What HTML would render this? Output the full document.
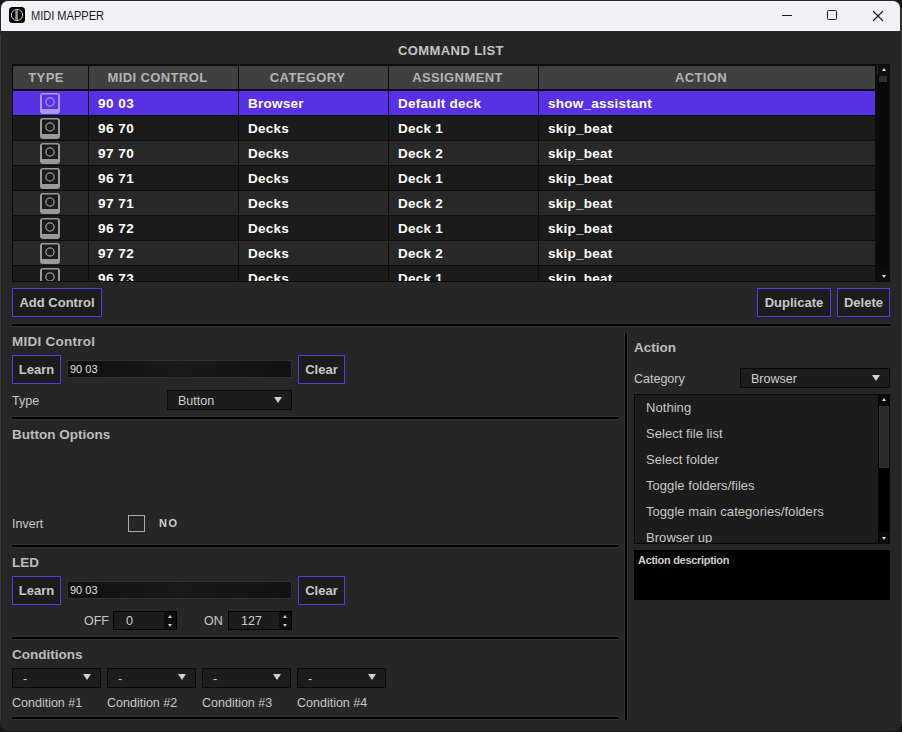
<!DOCTYPE html><html><head><meta charset="utf-8"><style>
*{margin:0;padding:0;box-sizing:border-box}
html,body{width:902px;height:732px;overflow:hidden;background:#161616;font-family:"Liberation Sans",sans-serif}
.a{position:absolute}
#win{position:absolute;left:0px;top:0;width:901px;height:731px;background:#262626;border-radius:8px;overflow:hidden}
#title{position:absolute;left:1px;top:1px;width:899px;height:30px;background:#f3f1f6;border-radius:7px 7px 0 0}
.b{font-weight:bold}
.hd{position:absolute;top:66px;height:23px;background:#404040;color:#b4b4b4;font-weight:bold;font-size:13px;text-align:center;line-height:23px;letter-spacing:0.4px;padding-right:12px}
.row{position:absolute;left:13px;width:862px;height:24px}
.cell{position:absolute;top:1px;height:24px;line-height:24px;letter-spacing:0.25px;color:#fff;font-weight:bold;font-size:13.5px;white-space:nowrap}
.btn{position:absolute;border:1px solid #5a3ae8;background:#1c1c1c;color:#c8c8c8;font-weight:bold;font-size:13px;text-align:center}
.sep{position:absolute;height:2px;background:#000;box-shadow:0 1px 0 #333,0 -1px 0 #333}
.lbl{position:absolute;color:#c8c8c8;font-size:12.5px;white-space:nowrap}
.hdr{position:absolute;color:#bdbdbd;font-weight:bold;font-size:13.5px;white-space:nowrap}
.tf{position:absolute;background:linear-gradient(90deg,#101010,#191919 50%,#111111);border:1px solid #303030;color:#e0e0e0;font-size:11px}
.dd{position:absolute;background:#1c1c1c;border:1px solid #0a0a0a;color:#d0d0d0;font-size:12.5px;padding-top:1px}
.arr{position:absolute;width:0;height:0;border-left:4px solid transparent;border-right:4px solid transparent;border-top:6px solid #d0d0d0}
</style></head><body>
<div id="win">
<div id="title">
<svg class="a" style="left:8px;top:6px" width="16" height="16" viewBox="0 0 16 16"><rect x="0" y="0" width="16" height="16" rx="3.5" fill="#000"/><circle cx="8" cy="8" r="5.6" fill="none" stroke="#ddd" stroke-width="0.9"/><rect x="6.3" y="3.2" width="2.6" height="9.6" fill="#999"/></svg>
<div class="a" style="left:29.5px;top:6.5px;font-size:12px;color:#1a1a1a;line-height:16px;transform:scaleX(0.92);transform-origin:0 0;white-space:nowrap">MIDI MAPPER</div>
<div class="a" style="left:781px;top:14px;width:10px;height:1px;background:#1a1a1a"></div>
<div class="a" style="left:826px;top:9px;width:10px;height:10px;border:1px solid #1a1a1a;border-radius:1.5px"></div>
<svg class="a" style="left:871px;top:9px" width="12" height="12" viewBox="0 0 12 12"><path d="M1 1L11 11M11 1L1 11" stroke="#1a1a1a" stroke-width="1.1"/></svg>
</div>
<div class="hdr" style="left:0;width:902px;text-align:center;top:43px;font-size:13px;letter-spacing:0.4px;color:#c4c4c4;line-height:16px">COMMAND LIST</div>
<div class="a" style="left:12px;top:64px;width:878px;height:218px;background:#0c0c0c;overflow:hidden">
<div class="hd" style="left:1px;top:2px;width:75px;padding-right:9px;">TYPE</div>
<div class="hd" style="left:77px;top:2px;width:149px;">MIDI CONTROL</div>
<div class="hd" style="left:227px;top:2px;width:149px;">CATEGORY</div>
<div class="hd" style="left:377px;top:2px;width:149px;">ASSIGNMENT</div>
<div class="hd" style="left:527px;top:2px;width:336px;">ACTION</div>
<div class="a" style="left:1px;top:27px;width:862px;height:24px">
<div class="a" style="left:0px;top:0;width:75px;height:24px;background:#5930e4"></div>
<div class="a" style="left:76px;top:0;width:149px;height:24px;background:#5930e4"></div>
<div class="a" style="left:226px;top:0;width:149px;height:24px;background:#5930e4"></div>
<div class="a" style="left:376px;top:0;width:149px;height:24px;background:#5930e4"></div>
<div class="a" style="left:526px;top:0;width:336px;height:24px;background:#5930e4"></div>
<svg width="20" height="21" viewBox="0 0 20 21" style="position:absolute;left:27px;top:2px"><rect x="0" y="0" width="20" height="21" rx="3" fill="#a898f0"/><rect x="2" y="1.6" width="16" height="14.4" rx="0.6" fill="#5930e4"/><circle cx="10" cy="9" r="4.1" fill="none" stroke="#a898f0" stroke-width="1.3"/></svg>
<div class="cell" style="left:85px;letter-spacing:0.5px">90 03</div>
<div class="cell" style="left:235px">Browser</div>
<div class="cell" style="left:385px">Default deck</div>
<div class="cell" style="left:535px">show_assistant</div>
</div>
<div class="a" style="left:1px;top:52px;width:862px;height:24px">
<div class="a" style="left:0px;top:0;width:75px;height:24px;background:#1b1b1b"></div>
<div class="a" style="left:76px;top:0;width:149px;height:24px;background:#1b1b1b"></div>
<div class="a" style="left:226px;top:0;width:149px;height:24px;background:#1b1b1b"></div>
<div class="a" style="left:376px;top:0;width:149px;height:24px;background:#1b1b1b"></div>
<div class="a" style="left:526px;top:0;width:336px;height:24px;background:#1b1b1b"></div>
<svg width="20" height="21" viewBox="0 0 20 21" style="position:absolute;left:27px;top:2px"><rect x="0" y="0" width="20" height="21" rx="3" fill="#9a9a9a"/><rect x="2" y="1.6" width="16" height="14.4" rx="0.6" fill="#1b1b1b"/><circle cx="10" cy="9" r="4.1" fill="none" stroke="#9a9a9a" stroke-width="1.3"/></svg>
<div class="cell" style="left:85px;letter-spacing:0.5px">96 70</div>
<div class="cell" style="left:235px">Decks</div>
<div class="cell" style="left:385px">Deck 1</div>
<div class="cell" style="left:535px">skip_beat</div>
</div>
<div class="a" style="left:1px;top:77px;width:862px;height:24px">
<div class="a" style="left:0px;top:0;width:75px;height:24px;background:#282828"></div>
<div class="a" style="left:76px;top:0;width:149px;height:24px;background:#282828"></div>
<div class="a" style="left:226px;top:0;width:149px;height:24px;background:#282828"></div>
<div class="a" style="left:376px;top:0;width:149px;height:24px;background:#282828"></div>
<div class="a" style="left:526px;top:0;width:336px;height:24px;background:#282828"></div>
<svg width="20" height="21" viewBox="0 0 20 21" style="position:absolute;left:27px;top:2px"><rect x="0" y="0" width="20" height="21" rx="3" fill="#9a9a9a"/><rect x="2" y="1.6" width="16" height="14.4" rx="0.6" fill="#1b1b1b"/><circle cx="10" cy="9" r="4.1" fill="none" stroke="#9a9a9a" stroke-width="1.3"/></svg>
<div class="cell" style="left:85px;letter-spacing:0.5px">97 70</div>
<div class="cell" style="left:235px">Decks</div>
<div class="cell" style="left:385px">Deck 2</div>
<div class="cell" style="left:535px">skip_beat</div>
</div>
<div class="a" style="left:1px;top:102px;width:862px;height:24px">
<div class="a" style="left:0px;top:0;width:75px;height:24px;background:#1b1b1b"></div>
<div class="a" style="left:76px;top:0;width:149px;height:24px;background:#1b1b1b"></div>
<div class="a" style="left:226px;top:0;width:149px;height:24px;background:#1b1b1b"></div>
<div class="a" style="left:376px;top:0;width:149px;height:24px;background:#1b1b1b"></div>
<div class="a" style="left:526px;top:0;width:336px;height:24px;background:#1b1b1b"></div>
<svg width="20" height="21" viewBox="0 0 20 21" style="position:absolute;left:27px;top:2px"><rect x="0" y="0" width="20" height="21" rx="3" fill="#9a9a9a"/><rect x="2" y="1.6" width="16" height="14.4" rx="0.6" fill="#1b1b1b"/><circle cx="10" cy="9" r="4.1" fill="none" stroke="#9a9a9a" stroke-width="1.3"/></svg>
<div class="cell" style="left:85px;letter-spacing:0.5px">96 71</div>
<div class="cell" style="left:235px">Decks</div>
<div class="cell" style="left:385px">Deck 1</div>
<div class="cell" style="left:535px">skip_beat</div>
</div>
<div class="a" style="left:1px;top:127px;width:862px;height:24px">
<div class="a" style="left:0px;top:0;width:75px;height:24px;background:#282828"></div>
<div class="a" style="left:76px;top:0;width:149px;height:24px;background:#282828"></div>
<div class="a" style="left:226px;top:0;width:149px;height:24px;background:#282828"></div>
<div class="a" style="left:376px;top:0;width:149px;height:24px;background:#282828"></div>
<div class="a" style="left:526px;top:0;width:336px;height:24px;background:#282828"></div>
<svg width="20" height="21" viewBox="0 0 20 21" style="position:absolute;left:27px;top:2px"><rect x="0" y="0" width="20" height="21" rx="3" fill="#9a9a9a"/><rect x="2" y="1.6" width="16" height="14.4" rx="0.6" fill="#1b1b1b"/><circle cx="10" cy="9" r="4.1" fill="none" stroke="#9a9a9a" stroke-width="1.3"/></svg>
<div class="cell" style="left:85px;letter-spacing:0.5px">97 71</div>
<div class="cell" style="left:235px">Decks</div>
<div class="cell" style="left:385px">Deck 2</div>
<div class="cell" style="left:535px">skip_beat</div>
</div>
<div class="a" style="left:1px;top:152px;width:862px;height:24px">
<div class="a" style="left:0px;top:0;width:75px;height:24px;background:#1b1b1b"></div>
<div class="a" style="left:76px;top:0;width:149px;height:24px;background:#1b1b1b"></div>
<div class="a" style="left:226px;top:0;width:149px;height:24px;background:#1b1b1b"></div>
<div class="a" style="left:376px;top:0;width:149px;height:24px;background:#1b1b1b"></div>
<div class="a" style="left:526px;top:0;width:336px;height:24px;background:#1b1b1b"></div>
<svg width="20" height="21" viewBox="0 0 20 21" style="position:absolute;left:27px;top:2px"><rect x="0" y="0" width="20" height="21" rx="3" fill="#9a9a9a"/><rect x="2" y="1.6" width="16" height="14.4" rx="0.6" fill="#1b1b1b"/><circle cx="10" cy="9" r="4.1" fill="none" stroke="#9a9a9a" stroke-width="1.3"/></svg>
<div class="cell" style="left:85px;letter-spacing:0.5px">96 72</div>
<div class="cell" style="left:235px">Decks</div>
<div class="cell" style="left:385px">Deck 1</div>
<div class="cell" style="left:535px">skip_beat</div>
</div>
<div class="a" style="left:1px;top:177px;width:862px;height:24px">
<div class="a" style="left:0px;top:0;width:75px;height:24px;background:#282828"></div>
<div class="a" style="left:76px;top:0;width:149px;height:24px;background:#282828"></div>
<div class="a" style="left:226px;top:0;width:149px;height:24px;background:#282828"></div>
<div class="a" style="left:376px;top:0;width:149px;height:24px;background:#282828"></div>
<div class="a" style="left:526px;top:0;width:336px;height:24px;background:#282828"></div>
<svg width="20" height="21" viewBox="0 0 20 21" style="position:absolute;left:27px;top:2px"><rect x="0" y="0" width="20" height="21" rx="3" fill="#9a9a9a"/><rect x="2" y="1.6" width="16" height="14.4" rx="0.6" fill="#1b1b1b"/><circle cx="10" cy="9" r="4.1" fill="none" stroke="#9a9a9a" stroke-width="1.3"/></svg>
<div class="cell" style="left:85px;letter-spacing:0.5px">97 72</div>
<div class="cell" style="left:235px">Decks</div>
<div class="cell" style="left:385px">Deck 2</div>
<div class="cell" style="left:535px">skip_beat</div>
</div>
<div class="a" style="left:1px;top:202px;width:862px;height:24px">
<div class="a" style="left:0px;top:0;width:75px;height:24px;background:#1b1b1b"></div>
<div class="a" style="left:76px;top:0;width:149px;height:24px;background:#1b1b1b"></div>
<div class="a" style="left:226px;top:0;width:149px;height:24px;background:#1b1b1b"></div>
<div class="a" style="left:376px;top:0;width:149px;height:24px;background:#1b1b1b"></div>
<div class="a" style="left:526px;top:0;width:336px;height:24px;background:#1b1b1b"></div>
<svg width="20" height="21" viewBox="0 0 20 21" style="position:absolute;left:27px;top:2px"><rect x="0" y="0" width="20" height="21" rx="3" fill="#9a9a9a"/><rect x="2" y="1.6" width="16" height="14.4" rx="0.6" fill="#1b1b1b"/><circle cx="10" cy="9" r="4.1" fill="none" stroke="#9a9a9a" stroke-width="1.3"/></svg>
<div class="cell" style="left:85px;letter-spacing:0.5px">96 73</div>
<div class="cell" style="left:235px">Decks</div>
<div class="cell" style="left:385px">Deck 1</div>
<div class="cell" style="left:535px">skip_beat</div>
</div>
<div class="a" style="left:0;top:217px;width:878px;height:1px;background:#0c0c0c"></div>
<div class="a" style="left:866px;top:2px;width:11px;height:213px;background:#0a0a0a"></div>
<div class="a" style="left:866px;top:1px;width:11px;height:10px;background:#0e0e0e"></div>
<div class="a" style="left:865px;top:1px;width:1px;height:10px;background:#2e2e2e"></div>
<div class="a" style="left:869.5px;top:4px;width:0;height:0;border-left:2.5px solid transparent;border-right:2.5px solid transparent;border-bottom:3px solid #ddd"></div>
<div class="a" style="left:867px;top:12px;width:8px;height:6px;background:#2a2a2a;border:1px solid #2e2e2e"></div>
<div class="a" style="left:866px;top:205px;width:11px;height:11px;background:#0e0e0e"></div>
<div class="a" style="left:869.5px;top:211px;width:0;height:0;border-left:2.5px solid transparent;border-right:2.5px solid transparent;border-top:3px solid #ddd"></div>
</div>
<div class="btn" style="left:12px;top:288px;width:90px;height:29px;line-height:27px">Add Control</div>
<div class="btn" style="left:757px;top:288px;width:74px;height:29px;line-height:27px">Duplicate</div>
<div class="btn" style="left:837px;top:288px;width:53px;height:29px;line-height:27px">Delete</div>
<div class="sep" style="left:12px;top:324px;width:878px"></div>
<div class="hdr" style="left:12px;top:334px;line-height:16px;letter-spacing:0.25px">MIDI Control</div>
<div class="btn" style="left:12px;top:355px;width:49px;height:29px;line-height:27px">Learn</div>
<div class="tf" style="left:67px;top:360px;width:225px;height:18px;padding-left:2px;line-height:17px">90 03</div>
<div class="btn" style="left:298px;top:355px;width:47px;height:29px;line-height:27px">Clear</div>
<div class="lbl" style="left:12px;top:393px;line-height:16px">Type</div>
<div class="dd" style="left:167px;top:390px;width:125px;height:20px;padding-left:10px;line-height:18px">Button</div>
<div class="arr" style="left:274px;top:397px"></div>
<div class="sep" style="left:12px;top:417px;width:606px"></div>
<div class="hdr" style="left:12px;top:427px;line-height:16px">Button Options</div>
<div class="lbl" style="left:12px;top:516px;line-height:16px">Invert</div>
<div class="a" style="left:128px;top:515px;width:17px;height:17px;border:1px solid #aaa"></div>
<div class="a" style="left:159px;top:517px;font-size:11px;font-weight:bold;color:#cfcfcf;letter-spacing:1.5px;line-height:13px">NO</div>
<div class="sep" style="left:12px;top:545px;width:606px"></div>
<div class="hdr" style="left:12px;top:555px;line-height:16px">LED</div>
<div class="btn" style="left:12px;top:576px;width:49px;height:29px;line-height:27px">Learn</div>
<div class="tf" style="left:67px;top:581px;width:225px;height:18px;padding-left:2px;line-height:17px">90 03</div>
<div class="btn" style="left:298px;top:576px;width:47px;height:29px;line-height:27px">Clear</div>
<div class="lbl" style="left:84px;top:613px;line-height:16px">OFF</div><div class="a" style="left:113px;top:611px;width:64px;height:19px;background:#000"></div><div class="a" style="left:164px;top:612px;width:12px;height:17px;background:#0e0e0e"></div><div class="a" style="left:114px;top:612px;width:50px;height:17px;background:#1c1c1c;color:#d0d0d0;font-size:12.5px;padding-left:12px;line-height:19px">0</div><div class="a" style="left:168px;top:615px;width:0;height:0;border-left:2.5px solid transparent;border-right:2.5px solid transparent;border-bottom:3px solid #ccc"></div><div class="a" style="left:168px;top:624px;width:0;height:0;border-left:2.5px solid transparent;border-right:2.5px solid transparent;border-top:3px solid #ccc"></div>
<div class="lbl" style="left:204px;top:613px;line-height:16px">ON</div><div class="a" style="left:228px;top:611px;width:64px;height:19px;background:#000"></div><div class="a" style="left:279px;top:612px;width:12px;height:17px;background:#0e0e0e"></div><div class="a" style="left:229px;top:612px;width:50px;height:17px;background:#1c1c1c;color:#d0d0d0;font-size:12.5px;padding-left:12px;line-height:19px">127</div><div class="a" style="left:283px;top:615px;width:0;height:0;border-left:2.5px solid transparent;border-right:2.5px solid transparent;border-bottom:3px solid #ccc"></div><div class="a" style="left:283px;top:624px;width:0;height:0;border-left:2.5px solid transparent;border-right:2.5px solid transparent;border-top:3px solid #ccc"></div>
<div class="sep" style="left:12px;top:637px;width:606px"></div>
<div class="hdr" style="left:12px;top:647px;line-height:16px">Conditions</div>
<div class="dd" style="left:12px;top:668px;width:89px;height:20px;padding-left:10px;line-height:18px">-</div>
<div class="arr" style="left:83px;top:674px"></div>
<div class="lbl" style="left:12px;top:695px;line-height:16px">Condition #1</div>
<div class="dd" style="left:107px;top:668px;width:89px;height:20px;padding-left:10px;line-height:18px">-</div>
<div class="arr" style="left:178px;top:674px"></div>
<div class="lbl" style="left:107px;top:695px;line-height:16px">Condition #2</div>
<div class="dd" style="left:202px;top:668px;width:89px;height:20px;padding-left:10px;line-height:18px">-</div>
<div class="arr" style="left:273px;top:674px"></div>
<div class="lbl" style="left:202px;top:695px;line-height:16px">Condition #3</div>
<div class="dd" style="left:297px;top:668px;width:89px;height:20px;padding-left:10px;line-height:18px">-</div>
<div class="arr" style="left:368px;top:674px"></div>
<div class="lbl" style="left:297px;top:695px;line-height:16px">Condition #4</div>
<div class="sep" style="left:12px;top:717px;width:606px"></div>
<div class="a" style="left:625px;top:333px;width:2px;height:387px;background:#000;box-shadow:1px 0 0 #333,-1px 0 0 #333"></div>
<div class="hdr" style="left:634px;top:340px;line-height:16px">Action</div>
<div class="lbl" style="left:634px;top:371px;line-height:16px">Category</div>
<div class="dd" style="left:740px;top:368px;width:150px;height:20px;padding-left:10px;line-height:18px">Browser</div>
<div class="arr" style="left:872px;top:375px"></div>
<div class="a" style="left:634px;top:394px;width:256px;height:150px;background:#1c1c1c;border:1px solid #0a0a0a;overflow:hidden">
<div class="lbl" style="left:11px;top:5px;line-height:16px;font-size:13px;letter-spacing:0.05px">Nothing</div>
<div class="lbl" style="left:11px;top:31px;line-height:16px;font-size:13px;letter-spacing:0.05px">Select file list</div>
<div class="lbl" style="left:11px;top:57px;line-height:16px;font-size:13px;letter-spacing:0.05px">Select folder</div>
<div class="lbl" style="left:11px;top:83px;line-height:16px;font-size:13px;letter-spacing:0.05px">Toggle folders/files</div>
<div class="lbl" style="left:11px;top:109px;line-height:16px;font-size:13px;letter-spacing:0.05px">Toggle main categories/folders</div>
<div class="lbl" style="left:11px;top:135px;line-height:16px;font-size:13px;letter-spacing:0.05px">Browser up</div>
<div class="a" style="left:243px;top:0;width:11px;height:148px;background:#000"></div>
<div class="a" style="left:244px;top:0;width:10px;height:10px;background:#0a0a0a"></div>
<div class="a" style="left:244px;top:137px;width:10px;height:11px;background:#0a0a0a"></div>
<div class="a" style="left:244px;top:11px;width:10px;height:62px;background:#2a2a2a;border:1px solid #303030"></div>
<div class="a" style="left:246.5px;top:3px;width:0;height:0;border-left:2.5px solid transparent;border-right:2.5px solid transparent;border-bottom:3px solid #ddd"></div>
<div class="a" style="left:246.5px;top:142px;width:0;height:0;border-left:2.5px solid transparent;border-right:2.5px solid transparent;border-top:3px solid #ddd"></div>
</div>
<div class="a" style="left:634px;top:550px;width:256px;height:50px;background:#000"></div>
<div class="a" style="left:638px;top:553px;color:#cfcfcf;font-weight:bold;font-size:11px;letter-spacing:-0.3px;line-height:14px">Action description</div>
</div>
<div class="a" style="left:0;top:34px;width:1px;height:686px;background:#3c3c3c"></div>
<div class="a" style="left:901px;top:8px;width:1px;height:716px;background:#3a3a3a"></div>
</body></html>
